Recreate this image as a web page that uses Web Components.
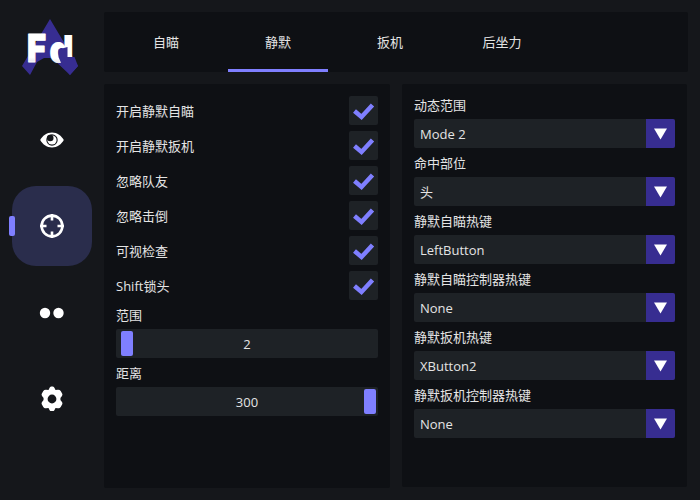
<!DOCTYPE html>
<html lang="zh"><head><meta charset="utf-8"><title>FD</title>
<style>
html,body{margin:0;padding:0;background:#15171b}
body{width:700px;height:500px;overflow:hidden;font:13px/17px "Open Sans","Noto Sans CJK SC",sans-serif;color:#e4e4e4}
</style></head><body>
<app-shell>
  <side-nav slot="nav">
    <fd-logo></fd-logo>
    <nav-btn icon="eye"></nav-btn>
    <nav-btn icon="cross" active></nav-btn>
    <nav-btn icon="dots"></nav-btn>
    <nav-btn icon="gear"></nav-btn>
  </side-nav>
  <tab-bar slot="tabs">
    <tab-item>自瞄</tab-item>
    <tab-item active>静默</tab-item>
    <tab-item>扳机</tab-item>
    <tab-item>后坐力</tab-item>
  </tab-bar>
  <set-panel slot="left">
    <check-row>开启静默自瞄</check-row>
    <check-row>开启静默扳机</check-row>
    <check-row>忽略队友</check-row>
    <check-row>忽略击倒</check-row>
    <check-row>可视检查</check-row>
    <check-row>Shift锁头</check-row>
    <slider-row label="范围" value="2" pos="start"></slider-row>
    <slider-row label="距离" value="300" pos="end"></slider-row>
  </set-panel>
  <set-panel slot="right">
    <combo-row label="动态范围" value="Mode 2"></combo-row>
    <combo-row label="命中部位" value="头"></combo-row>
    <combo-row label="静默自瞄热键" value="LeftButton"></combo-row>
    <combo-row label="静默自瞄控制器热键" value="None"></combo-row>
    <combo-row label="静默扳机热键" value="XButton2"></combo-row>
    <combo-row label="静默扳机控制器热键" value="None"></combo-row>
  </set-panel>
</app-shell>
<script>
const ICONS={
 eye:`<svg width="24" height="24" viewBox="0 0 24 24"><path fill="#fff" fill-rule="evenodd" d="M12 4.500C6.800 4.500 2.300 8 .2 12c2.100 4 6.600 7.500 11.800 7.500S21.700 16 23.800 12C21.700 8 17.200 4.500 12 4.500ZM12 6.300a5.700 5.700 0 1 1 0 11.400a5.700 5.700 0 0 1 0-11.400Z"/><path fill="#fff" d="M2.400 12C4 9.300 6.200 7.300 8.400 6.300a7 7 0 0 0 0 11.400C6.200 16.700 4 14.700 2.400 12ZM21.600 12c-1.600-2.700-3.800-4.700-6-5.700a7 7 0 0 1 0 11.400c2.200-1 4.400-3 6-5.700Z"/><circle cx="12" cy="12" r="4.600" fill="#fff"/><circle cx="10.200" cy="10" r="3.300" fill="#15171b"/></svg>`,
 cross:`<svg width="24" height="24" viewBox="0 0 24 24" fill="none" stroke="#fff"><circle cx="12" cy="12" r="10.400" stroke-width="2.600"/><path stroke-width="2.600" d="M12 0v6.500M12 17.500V24M0 12h6.500M17.500 12H24"/></svg>`,
 dots:`<svg width="26" height="24" viewBox="0 -1 26 24" fill="#fff"><circle cx="6" cy="12" r="5.200"/><circle cx="19.500" cy="12" r="5.200"/></svg>`,
 gear:`<svg width="24" height="26" viewBox="0 -1 24 26"><path fill="#fff" fill-rule="evenodd" d="M12 .6c1 0 2 .3 2.500 1.300l1 2 2.300-.2c1.300-.1 2.300.3 2.900 1.200l1.400 2.500c.5.9.4 2-.3 2.800L20.400 12c.1.700.1 1.300 0 2l1.400 1.800c.7.800.8 1.900.3 2.800l-1.400 2.500c-.6.900-1.600 1.300-2.900 1.200l-2.300-.2-1 2c-.5 1-1.500 1.300-2.500 1.300s-2-.3-2.500-1.300l-1-2-2.300.2c-1.300.1-2.300-.3-2.900-1.200l-1.400-2.500c-.5-.9-.4-2 .3-2.800L3.600 14c-.1-.7-.1-1.300 0-2L2.200 10.200c-.7-.8-.8-1.900-.3-2.800l1.400-2.500c.6-.9 1.600-1.300 2.900-1.200l2.300.2 1-2C10 .9 11 .6 12 .6ZM12 8.600a4.400 4.400 0 1 0 0 8.800a4.400 4.400 0 0 0 0-8.800Z"/></svg>`
};
function def(name,css,html){
  customElements.define(name,class extends HTMLElement{
    constructor(){super();this.attachShadow({mode:'open'});}
    connectedCallback(){
      const h=typeof html==='function'?html(this):html;
      this.shadowRoot.innerHTML=`<style>${css}</style>${h}`;
    }
  });
}
def('app-shell',`:host{display:grid;grid-template-columns:104px 286px 298px;grid-template-rows:84px 404px;grid-template-areas:"nav tabs tabs" "nav l r";width:700px;height:500px}
 .nav{grid-area:nav}.tabs{grid-area:tabs;padding-top:12px;box-sizing:border-box}
 .l{grid-area:l}.r{grid-area:r;padding-left:12px;padding-right:1px;height:403px}`,
 `<div class="nav"><slot name="nav"></slot></div><div class="tabs"><slot name="tabs"></slot></div><div class="l"><slot name="left"></slot></div><div class="r"><slot name="right"></slot></div>`);
def('side-nav',`:host{display:flex;flex-direction:column;gap:6px;padding:6px 0 0 12px;box-sizing:border-box;width:104px}`,`<slot></slot>`);
def('fd-logo',`:host{display:block;width:80px;height:88px;margin-left:-12px}svg{display:block;overflow:visible}`,
 `<svg width="104" height="88" viewBox="0 0 104 88">
 <defs><linearGradient id="g" x1="0" y1="0" x2="0" y2="1"><stop offset="0" stop-color="#fff"/><stop offset=".72" stop-color="#fff"/><stop offset="1" stop-color="#b9b9cc"/></linearGradient></defs>
 <path fill="#372d91" d="M50 13 78 60 70 69 52 52 44 52 37 56 30 69 22 60Z"/>
 <text x="27" y="55.500" font-family="Inter,'Liberation Sans',sans-serif" font-weight="900" font-size="39" textLength="19" lengthAdjust="spacingAndGlyphs" fill="url(#g)" stroke="#fff" stroke-width="1" stroke-linejoin="round">F</text>
 <text x="49" y="56.500" font-family="Inter,'Liberation Sans',sans-serif" font-weight="900" font-size="39" textLength="25" lengthAdjust="spacingAndGlyphs" fill="url(#g)">d</text>
 <path fill="#372d91" d="M58.500 43.500 67.500 41 67.500 51 74.500 51 78 60 70 69 62 59 58.500 51Z"/>
 </svg>`);
def('nav-btn',`:host{display:flex;align-items:center;justify-content:center;width:80px;height:80px;border-radius:24px;position:relative;flex:none}
 :host([active]){background:#2a2d4c}
 :host([active])::before{content:"";position:absolute;left:-3px;top:30px;width:6px;height:20px;border-radius:2px;background:#7f7fff}
 svg{display:block}`,el=>ICONS[el.getAttribute('icon')]);
def('tab-bar',`:host{display:flex;gap:12px;height:60px;width:584px;padding-left:12px;background:#0e1014;border-radius:2px;box-sizing:border-box}`,`<slot></slot>`);
def('tab-item',`:host{display:flex;align-items:center;justify-content:center;width:100px;height:60px;position:relative;box-sizing:border-box;padding-top:1px}
 :host([active])::after{content:"";position:absolute;left:0;right:0;bottom:0;height:3px;background:#7f7fff}`,`<slot></slot>`);
def('set-panel',`:host{display:flex;flex-direction:column;gap:6px;box-sizing:border-box;height:100%;padding:12px;background:#0e1014;border-radius:2px}`,`<slot></slot>`);
def('check-row',`:host{display:flex;align-items:center;justify-content:space-between;height:29px}
 span{padding-top:2px}
 .b{width:29px;height:29px;background:#1e2226;border-radius:2px;display:block}`,
 `<span><slot></slot></span><svg class="b" viewBox="0 0 29 29"><path fill="none" stroke="#7f7fff" stroke-width="4.500" d="M5.500 15 12.500 21 23.500 9"/></svg>`);
def('slider-row',`:host{display:flex;flex-direction:column;gap:6px}
 .t{height:17px;box-sizing:border-box;padding-top:1px;line-height:17px}
 .s{height:29px;background:#1e2226;border-radius:2px;display:flex;align-items:center;justify-content:center;position:relative}
 .s span{padding-top:2px}
 .g{position:absolute;top:2px;width:12px;height:25px;background:#7f7fff;border-radius:2px}
 .start{left:5px}.end{right:2px}`,
 el=>`<div class="t">${el.getAttribute('label')}</div><div class="s"><i class="g ${el.getAttribute('pos')}"></i><span>${el.getAttribute('value')}</span></div>`);
def('combo-row',`:host{display:flex;flex-direction:column;gap:6px}
 .t{height:17px;box-sizing:border-box;padding-top:1px;line-height:17px}
 .c{height:29px;background:#1e2226;border-radius:2px;display:flex;align-items:center;overflow:hidden}
 .v{flex:1;padding:2px 0 0 6px}
 .a{width:29px;height:29px;background:#372d91;display:flex;align-items:center;justify-content:center}
 svg{display:block}`,
 el=>`<div class="t">${el.getAttribute('label')}</div><div class="c"><span class="v">${el.getAttribute('value')}</span><span class="a"><svg width="13" height="12" viewBox="0 0 13 12"><path fill="#fff" d="M0 .5H13L6.500 11.500Z"/></svg></span></div>`);
</script>
</body></html>
